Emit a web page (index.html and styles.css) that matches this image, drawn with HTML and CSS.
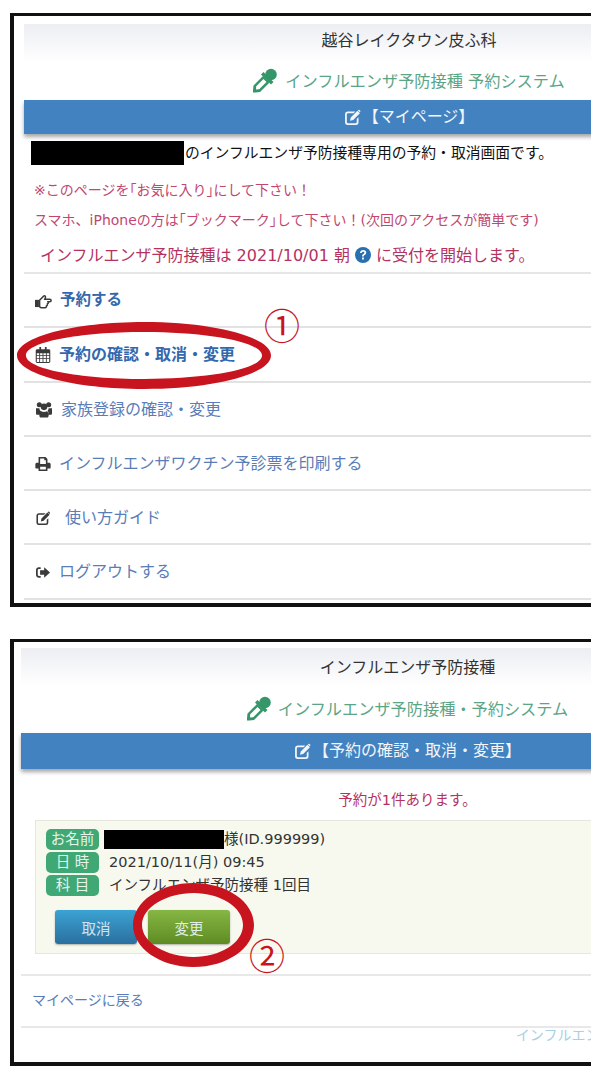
FILE: index.html
```html
<!DOCTYPE html>
<html lang="ja">
	<head>
		<meta charset="UTF-8" />
		<meta name="viewport" content="width=device-width, initial-scale=1.0" />
		<title>インフルエンザ予防接種 予約システム</title>
		<link rel="stylesheet" href="styles.css">
	</head>
	<body>
		<svg class="icon-defs" width="0" height="0">
			<symbol id="i-dropper" viewBox="0 0 24 24">
				<circle cx="18" cy="6" r="5.800" />
				<path d="M10.500 3.500L20.500 13.500 18 16 8 6z" />
				<path fill-rule="evenodd" d="M10 7.500L16.500 14 7 23.500 2.500 24 0 24 0 21.500.5 17zM10.500 10.500L3.200 17.800 3 21 6.200 20.800 13.500 13.500z" />
			</symbol>
			<symbol id="i-edit" viewBox="0 0 24 24">
				<path d="M5 3.500h11l-2.500 2.500H5.500A1.500 1.500 0 0 0 4 7.500v11A1.500 1.500 0 0 0 5.500 20h11a1.500 1.500 0 0 0 1.500-1.500V14l2.500-2.500v7.300A3.700 3.700 0 0 1 16.800 22.500H5.200A3.700 3.700 0 0 1 1.500 18.800V7.200A3.700 3.700 0 0 1 5 3.500z" />
				<path d="M19 2.500l3.500 3.500L13 15.500l-4.500 1.200L9.500 12zM20.300 1.300a1.200 1.200 0 0 1 1.600 0l1 1a1.200 1.200 0 0 1 0 1.600l-.6.700-2.800-2.700z" />
			</symbol>
			<symbol id="i-hand" viewBox="0 0 26 22">
				<path class="hand-line" d="M7 9L13 3c1.500-1.500 3.500-.5 3 1.500L15 7.500h7.500c2.800 0 2.800 4 0 4H20c.6 1.500 0 2.800-1 3.300.3 1.500-.2 2.700-1.500 3.200.2 1.500-.6 2.500-2.200 2.500H10c-1.500 0-2.500-1-3-1.500z" />
				<path d="M0 8.500h6v11H0z" />
			</symbol>
			<symbol id="i-calendar" viewBox="0 0 20 22">
				<path fill-rule="evenodd" d="M5 0h2.400v3.200h5.200V0H15v3.200h3c1.100 0 2 .9 2 2V20c0 1.100-.9 2-2 2H2c-1.100 0-2-.9-2-2V5.200c0-1.100.9-2 2-2h3zM1.500 8.500V11h3.300V8.500zM6 8.500V11h3.400V8.500zM10.600 8.500V11H14V8.500zM15.200 8.500V11h3.300V8.500zM1.500 12.200v2.900h3.300v-2.900zM6 12.200v2.900h3.400v-2.900zM10.600 12.200v2.900H14v-2.900zM15.200 12.200v2.900h3.300v-2.900zM1.500 16.300v3.900c0 .2.100.3.300.3h3v-4.200zM6 16.300v4.200h3.400v-4.200zM10.600 16.300v4.200H14v-4.200zM15.200 16.300v4.200h3c.2 0 .3-.1.300-.3v-3.900z" />
			</symbol>
			<symbol id="i-users" viewBox="0 0 24 24">
				<circle cx="5" cy="5" r="3.800" />
				<circle cx="19" cy="5" r="3.800" />
				<circle cx="12" cy="8" r="5" />
				<path d="M0 10h5c.5 3 1.500 4.500 2.500 5-1.500 1-2.500 2.500-2.500 5H2c-1.300 0-2-.7-2-2zM24 10h-5c-.5 3-1.500 4.500-2.500 5 1.500 1 2.500 2.500 2.500 5h3c1.300 0 2-.7 2-2zM7 14c1.200 1.200 3 1.800 5 1.800s3.800-.6 5-1.800c1.500.8 2 3.500 2 6.500 0 2-1 3.500-2.500 3.500h-9C6 24 5 22.500 5 20.500c0-3 .5-5.700 2-6.500z" />
			</symbol>
			<symbol id="i-print" viewBox="0 0 24 22">
				<path fill-rule="evenodd" d="M5 0h11l3 3v6h2.500C23 9 24 10 24 11.500V17c0 .6-.4 1-1 1h-4v4H5v-4H1c-.6 0-1-.4-1-1v-5.500C0 10 1 9 2.500 9H5zM7.500 2.500V11h9V5h-2.500V2.500zM7.500 15.500v4h9v-4z" />
			</symbol>
			<symbol id="i-signout" viewBox="0 0 24 18">
				<path d="M8 0H5C2 0 0 2 0 5v8c0 3 2 5 5 5h3v-3H5c-1 0-2-1-2-2V5c0-1 1-2 2-2h3z" />
				<path d="M14 0L24 9 14 18V13H7V5h7z" />
			</symbol>
		</svg>

		<section class="panel panel-mypage">
			<header class="head">
				<h1 class="head-title">越谷レイクタウン皮ふ科</h1>
				<p class="head-system"><svg class="ic-dropper"><use href="#i-dropper" /></svg>インフルエンザ予防接種 予約システム</p>
			</header>
			<h2 class="bar"><svg class="ic-bar"><use href="#i-edit" /></svg>【マイページ】</h2>
			<p class="intro"><span class="mask mask-intro"></span>のインフルエンザ予防接種専用の予約・取消画面です。</p>
			<p class="note note-a">※このページを<span class="half">「</span>お気に入り<span class="half">」</span>にして下さい！</p>
			<p class="note note-b">スマホ、iPhoneの方は<span class="half">「</span>ブックマーク<span class="half">」</span>して下さい！(次回のアクセスが簡単です)</p>
			<p class="notice">インフルエンザ予防接種は 2021/10/01 朝 <svg class="ic-help" viewBox="0 0 20 20"><circle cx="10" cy="10" r="10" /><path class="help-mark" d="M6.200 7.500C6.500 5 8 3.800 10.200 3.800c2.300 0 3.900 1.300 3.900 3.200 0 1.400-.8 2.200-1.900 3-1 .7-1.200 1-1.200 2H8.800c0-1.700.4-2.400 1.600-3.200.9-.6 1.300-1 1.300-1.700 0-.8-.6-1.300-1.500-1.300-1 0-1.500.6-1.700 1.700zM8.800 13.200h2.300v2.500H8.800z" /></svg> に受付を開始します。</p>
			<ul class="menu">
				<li class="menu-row"><a class="menu-link strong"><svg class="ic-menu ic-hand"><use href="#i-hand" /></svg>予約する</a></li>
				<li class="menu-row"><a class="menu-link strong calendar"><svg class="ic-menu ic-calendar"><use href="#i-calendar" /></svg>予約の確認・取消・変更</a></li>
				<li class="menu-row"><a class="menu-link"><svg class="ic-menu ic-users"><use href="#i-users" /></svg>家族登録の確認・変更</a></li>
				<li class="menu-row"><a class="menu-link"><svg class="ic-menu ic-print"><use href="#i-print" /></svg>インフルエンザワクチン予診票を印刷する</a></li>
				<li class="menu-row"><a class="menu-link"><svg class="ic-menu ic-edit"><use href="#i-edit" /></svg>使い方ガイド</a></li>
				<li class="menu-row"><a class="menu-link"><svg class="ic-menu ic-signout"><use href="#i-signout" /></svg>ログアウトする</a></li>
			</ul>

			<svg class="ring ring-one" viewBox="0 0 254 67"><path fill-rule="evenodd" d="M127 0C197 0 254 15 254 33.500S197 67 127 67 0 52 0 33.500 57 0 127 0zM127 10C62 10 9 20 9 33.500S62 57 127 57s118-10 118-23.500S192 10 127 10z" /></svg>
			<span class="step step-one">①</span>
		</section>

		<section class="panel panel-confirm">
			<header class="head">
				<h1 class="head-title">インフルエンザ予防接種</h1>
				<p class="head-system"><svg class="ic-dropper"><use href="#i-dropper" /></svg>インフルエンザ予防接種・予約システム</p>
			</header>
			<h2 class="bar"><svg class="ic-bar"><use href="#i-edit" /></svg>【予約の確認・取消・変更】</h2>
			<p class="count">予約が1件あります。</p>
			<div class="card">
				<div class="card-row"><span class="tag">お名前</span><span class="mask mask-name"></span><span class="card-name">様(ID.999999)</span></div>
				<div class="card-row"><span class="tag">日 時</span><span class="card-value">2021/10/11(月) 09:45</span></div>
				<div class="card-row"><span class="tag">科 目</span><span class="card-value">インフルエンザ予防接種 1回目</span></div>
				<div class="card-actions">
					<button class="btn btn-cancel">取消</button>
					<button class="btn btn-change">変更</button>
				</div>
			</div>
			<p class="back"><a class="back-link">マイページに戻る</a></p>
			<p class="foot">インフルエンザ予防接種・予約システム</p>

			<svg class="ring ring-two" viewBox="0 0 121 84"><path fill-rule="evenodd" d="M60.500 0C94 0 121 19 121 42S94 84 60.500 84 0 65 0 42 27 0 60.500 0zM60.500 10C34 10 9 24 9 42s25 32 51.500 32S110 60 110 42 87 10 60.500 10z" /></svg>
			<span class="step step-two">②</span>
		</section>
	</body>
</html>
```

FILE: styles.css
```css
html {
	overflow: hidden;
}
body {
	margin: 0;
	padding-top: 13px;
	background: #fff;
	font-family: "DejaVu Sans", "Noto Sans CJK JP", sans-serif;
	font-size: 16px;
	line-height: 1.4;
	color: #222;
}
p,
h1,
h2,
ul {
	margin: 0;
	padding: 0;
	font-weight: 400;
}
.icon-defs {
	position: absolute;
}

/* panels are wider than the window, the right side is cut off */
.panel {
	position: relative;
	box-sizing: border-box;
	width: 784px;
	margin-left: 10px;
	border: solid #111;
	border-width: 3px 0 4px 4px;
	background: #fff;
}
.panel-mypage {
	height: 594px;
	margin-bottom: 32px;
	padding: 8px 0 0 10px;
}
.panel-confirm {
	height: 427px;
	padding: 6px 0 0 7px;
}

.head {
	background: linear-gradient(#eceef3, #fff 38px);
	text-align: center;
}
.head-title {
	font-size: 16px;
	line-height: 33px;
	color: #333;
}
.head-system {
	display: flex;
	align-items: center;
	justify-content: center;
	box-sizing: border-box;
	height: 43px;
	padding-top: 8px;
	font-size: 16.200px;
	color: #5aa586;
}
.panel-confirm .head-title {
	line-height: 40px;
}
.panel-confirm .head-system {
	height: 45px;
	padding: 0 0 1px;
}
.ic-dropper {
	width: 24px;
	height: 25px;
	margin-right: 8px;
	margin-top: -4px;
	fill: #35966a;
}
.panel-confirm .ic-dropper {
	margin-right: 7px;
}

.bar {
	display: flex;
	align-items: center;
	justify-content: center;
	box-sizing: border-box;
	height: 34px;
	background: #4282c0;
	box-shadow: 0 3px 4px rgba(0, 0, 0, 0.35);
	font-size: 16px;
	color: #f2f6fa;
}
.panel-confirm .bar {
	height: 36px;
}
.ic-bar {
	width: 17px;
	height: 17px;
	margin-right: 2px;
	fill: #f2f6fa;
}

.mask {
	display: inline-block;
	background: #000;
}
.intro {
	display: flex;
	align-items: center;
	height: 24px;
	margin-top: 7px;
	padding-left: 7px;
	font-size: 14.800px;
	color: #111;
}
.mask-intro {
	width: 153px;
	height: 24px;
	margin-right: 1px;
}
.note {
	padding-left: 10px;
	font-size: 14px;
	line-height: 20px;
	color: #c2476f;
}
.note-a {
	margin-top: 15px;
}
.note-b {
	margin-top: 10px;
}
.half {
	font-feature-settings: "halt";
}
.notice {
	height: 24px;
	margin-top: 14px;
	padding-left: 16px;
	font-size: 16px;
	line-height: 24px;
	white-space: nowrap;
	color: #b5325f;
}
.ic-help {
	width: 16px;
	height: 16px;
	vertical-align: -2px;
	fill: #2a6fb0;
}
.help-mark {
	fill: #fff;
}

.menu {
	margin-top: 4px;
	list-style: none;
	border-top: 2px solid #e6e6e6;
}
.menu-row {
	display: flex;
	align-items: center;
	box-sizing: border-box;
	height: 54.300px;
	padding: 2px 0 0 11px;
	border-bottom: 2px solid #e2e2e2;
}
.menu-link {
	display: flex;
	align-items: center;
	color: #5a7db8;
}
.menu-link.strong {
	font-weight: 700;
	font-size: 15.500px;
	color: #3468ae;
}
.menu-link.calendar {
	font-size: 16px;
}
.ic-menu {
	width: 16px;
	height: 15px;
	margin-right: 8px;
	fill: #3a3a3a;
}
.hand-line {
	fill: none;
	stroke: #3a3a3a;
	stroke-width: 2.400;
}
.ic-hand {
	width: 17px;
}
.ic-calendar {
	height: 16px;
}
.ic-users {
	height: 17px;
	margin-left: 1px;
	margin-right: 9px;
}
.ic-print {
	height: 14px;
}
.ic-edit {
	height: 15px;
	margin-right: 14px;
}
.ic-signout {
	width: 14px;
	height: 11px;
	margin-left: 1px;
	margin-right: 9px;
}

.count {
	margin-top: 20px;
	line-height: 22px;
	text-align: center;
	font-size: 14.500px;
	color: #b5325f;
}
.card {
	box-sizing: border-box;
	height: 134px;
	margin: 9px 0 0 14px;
	padding: 8px 0 0 10px;
	background: #f8f9ee;
	border: 1px solid #e6e6dc;
}
.card-row {
	display: flex;
	align-items: center;
	height: 21px;
	margin-bottom: 2px;
	font-size: 14.500px;
	color: #333;
}
.tag {
	box-sizing: border-box;
	width: 53px;
	height: 21px;
	margin-right: 10px;
	border-radius: 5px;
	background: #3fa875;
	color: #e6f4ea;
	text-align: center;
	font-size: 14.500px;
	line-height: 20px;
}
.card-row:first-child .tag {
	margin-right: 5px;
}
.mask-name {
	width: 120px;
	height: 19px;
}
.card-actions {
	display: flex;
	gap: 11px;
	margin: 14px 0 0 9px;
}
.btn {
	width: 82px;
	height: 34px;
	border: none;
	border-radius: 3px;
	font-family: inherit;
	font-size: 14.500px;
	color: #dfeee6;
	box-shadow: 0 1px 2px rgba(0, 0, 0, 0.3);
}
.btn-cancel {
	background: linear-gradient(#3ba3d3, #2b6f9f);
	color: #cfe3ee;
}
.btn-change {
	background: linear-gradient(#86b643, #5e8c24);
}
.back {
	display: flex;
	align-items: center;
	box-sizing: border-box;
	height: 54px;
	margin-top: 20px;
	padding-left: 11px;
	border-top: 2px solid #e8e8e8;
	border-bottom: 2px solid #e8e8e8;
	font-size: 14px;
	color: #5a7db8;
}
.foot {
	margin-top: -4px;
	padding-right: 27px;
	font-size: 14px;
	line-height: 22px;
	text-align: right;
	white-space: nowrap;
	color: #a9cfe4;
}

/* red handwriting laid over the screenshot */
.ring {
	position: absolute;
	fill: #c8141f;
}
.ring-one {
	left: 3px;
	top: 306px;
	width: 254px;
	height: 67px;
}
.ring-two {
	left: 119px;
	top: 241px;
	width: 121px;
	height: 84px;
}
.step {
	position: absolute;
	font-family: "Noto Sans CJK JP", sans-serif;
	font-size: 36px;
	line-height: 36px;
	color: #c8141f;
}
.step-one {
	left: 250px;
	top: 290px;
}
.step-two {
	left: 235px;
	top: 294px;
}
```
